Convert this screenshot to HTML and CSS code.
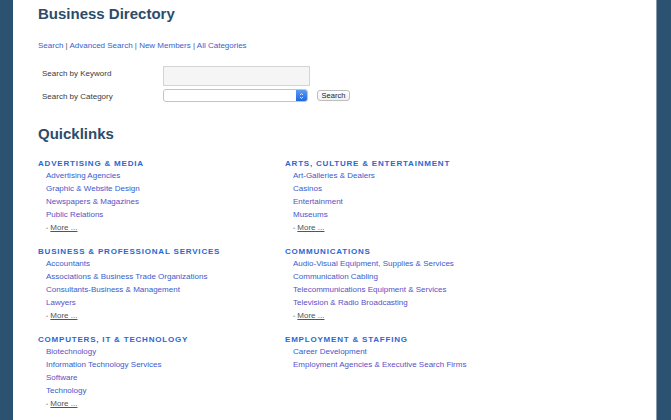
FILE: index.html
```html
<!DOCTYPE html>
<html lang="en">
<head>
    <meta charset="UTF-8">
    <title>Business Directory</title>
    <link rel="stylesheet" href="styles.css">
</head>
<body>
    <div class="band band-left"></div>
    <div class="page">
        <h1>Business Directory</h1>

        <p class="nav">
            <a href="#">Search</a> | <a href="#">Advanced Search</a> | <a href="#">New Members</a> | <a href="#">All Categories</a>
        </p>

        <form class="search-form">
            <div class="form-row">
                <label>Search by Keyword</label>
                <input type="text" class="keyword">
            </div>
            <div class="form-row">
                <label>Search by Category</label>
                <div class="select">
                    <span class="select-arrow">
                        <svg width="5" height="8" viewBox="0 0 5 8">
                            <path d="M1 3 L2.5 1.5 L4 3 M1 5 L2.5 6.5 L4 5" fill="none" stroke="#fff" stroke-width="0.8"/>
                        </svg>
                    </span>
                </div>
                <button type="button" class="btn">Search</button>
            </div>
        </form>

        <h2>Quicklinks</h2>

        <div class="quicklinks">
            <div class="category">
                <h3>Advertising &amp; Media</h3>
                <a href="#">Advertising Agencies</a>
                <a href="#">Graphic &amp; Website Design</a>
                <a href="#" class="visited">Newspapers &amp; Magazines</a>
                <a href="#" class="visited">Public Relations</a>
                <div class="more"><span class="bullet">&bull;</span> <a href="#">More ...</a></div>
            </div>
            <div class="category">
                <h3>Arts, Culture &amp; Entertainment</h3>
                <a href="#">Art-Galleries &amp; Dealers</a>
                <a href="#">Casinos</a>
                <a href="#" class="visited">Entertainment</a>
                <a href="#">Museums</a>
                <div class="more"><span class="bullet">&bull;</span> <a href="#">More ...</a></div>
            </div>
            <div class="category">
                <h3>Business &amp; Professional Services</h3>
                <a href="#">Accountants</a>
                <a href="#">Associations &amp; Business Trade Organizations</a>
                <a href="#">Consultants-Business &amp; Management</a>
                <a href="#" class="visited">Lawyers</a>
                <div class="more"><span class="bullet">&bull;</span> <a href="#">More ...</a></div>
            </div>
            <div class="category">
                <h3>Communications</h3>
                <a href="#">Audio-Visual Equipment, Supplies &amp; Services</a>
                <a href="#">Communication Cabling</a>
                <a href="#" class="visited">Telecommunications Equipment &amp; Services</a>
                <a href="#" class="visited">Television &amp; Radio Broadcasting</a>
                <div class="more"><span class="bullet">&bull;</span> <a href="#">More ...</a></div>
            </div>
            <div class="category">
                <h3>Computers, IT &amp; Technology</h3>
                <a href="#" class="visited">Biotechnology</a>
                <a href="#">Information Technology Services</a>
                <a href="#" class="visited">Software</a>
                <a href="#">Technology</a>
                <div class="more"><span class="bullet">&bull;</span> <a href="#">More ...</a></div>
            </div>
            <div class="category">
                <h3>Employment &amp; Staffing</h3>
                <a href="#">Career Development</a>
                <a href="#" class="visited">Employment Agencies &amp; Executive Search Firms</a>
            </div>
        </div>
    </div>
    <div class="band band-right"></div>
</body>
</html>
```

FILE: styles.css
```css
* {
    margin: 0;
    padding: 0;
    box-sizing: border-box;
}

body {
    font-family: "Liberation Sans", Arial, sans-serif;
    font-size: 8px;
    background: #ffffff;
    color: #333;
    display: flex;
    height: 420px;
    overflow: hidden;
}

.band {
    background: #2c5272;
    flex-shrink: 0;
}

.band-left {
    width: 13px;
}

.band-right {
    width: 15px;
    border-left: 1px solid #8a9aa8;
}

.page {
    flex: 1;
    padding: 5px 0 0 25px;
}

h1 {
    font-size: 15px;
    line-height: 18px;
    color: #2d4c68;
}

.nav {
    margin-top: 18px;
    line-height: 10px;
    color: #555;
}

.nav a {
    color: #3763c9;
    text-decoration: none;
}

.search-form {
    margin: 15px 0 0 4px;
    display: flex;
    flex-direction: column;
    gap: 3px;
}

.form-row {
    display: flex;
    align-items: flex-start;
}

.form-row label {
    width: 121px;
    margin-top: 3px;
    color: #3a3a3a;
    line-height: 10px;
}

.keyword {
    width: 147px;
    height: 20px;
    background: #f5f5f5;
    border: 1px solid #d4d4d4;
}

.select {
    width: 145px;
    height: 13px;
    border: 1px solid #c4c4c4;
    border-radius: 3px;
    background: #fff;
    display: flex;
    justify-content: flex-end;
    overflow: hidden;
}

.select-arrow {
    width: 11px;
    background: linear-gradient(#5a9cf6, #1f66e0);
    display: flex;
    align-items: center;
    justify-content: center;
}

.btn {
    margin: 1px 0 0 9px;
    width: 33px;
    height: 11px;
    font-family: inherit;
    font-size: 7.5px;
    line-height: 9px;
    color: #222;
    background: linear-gradient(#ffffff, #f0f0f0);
    border: 1px solid #bdbdbd;
    border-radius: 3px;
}

h2 {
    margin-top: 23px;
    font-size: 15px;
    line-height: 18px;
    color: #2d4c68;
}

.quicklinks {
    margin-top: 16px;
    display: grid;
    grid-template-columns: 247px 1fr;
    row-gap: 13px;
}

.category {
    display: flex;
    flex-direction: column;
    align-items: flex-start;
}

.category h3 {
    font-size: 8px;
    line-height: 10px;
    text-transform: uppercase;
    letter-spacing: 0.8px;
    color: #2b67d1;
}

.category a {
    margin-left: 8px;
    line-height: 13px;
    color: #3a5bcc;
    text-decoration: none;
}

.category a.visited {
    color: #5a4fc6;
}

.more {
    margin-left: 8px;
    height: 13px;
    line-height: 13px;
}

.more .bullet {
    color: #aaa;
    font-size: 6px;
    line-height: 1;
}

.category .more a {
    margin-left: 0;
    color: #555;
    text-decoration: underline;
}
```
